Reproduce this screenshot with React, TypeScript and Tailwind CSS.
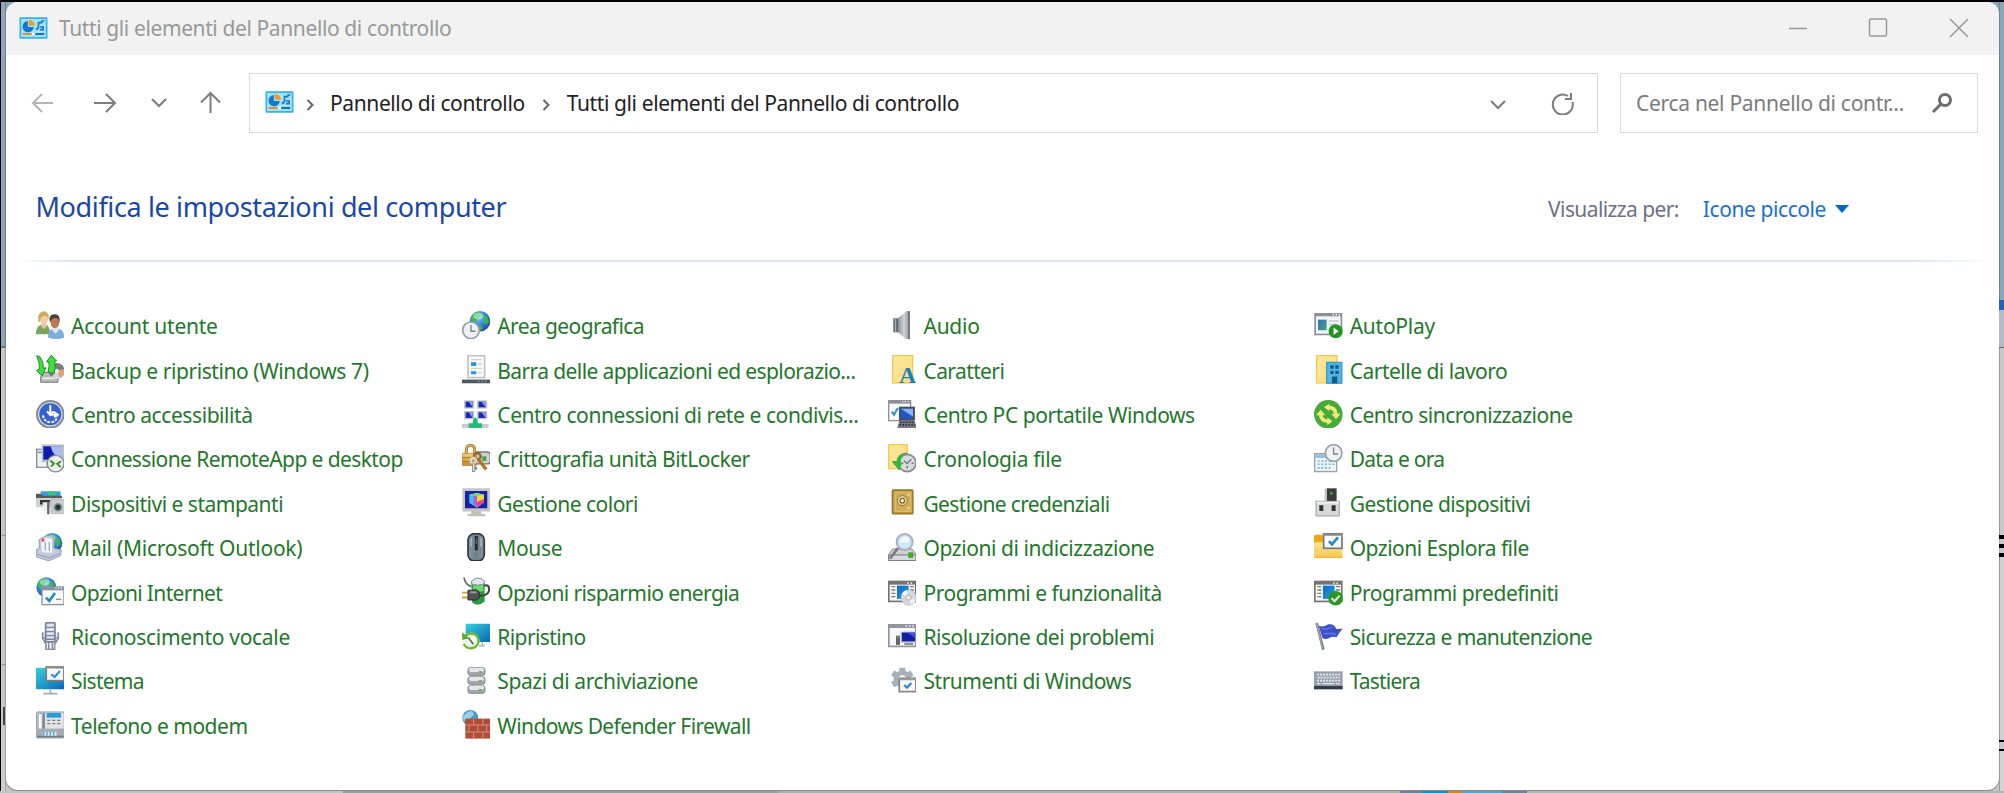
import type { ReactNode } from "react";

type Item = { label: string; icon: ReactNode; tracking: string };

const snug = "tracking-[-0.25px]";
const close = "tracking-[-0.42px]";
const normal = "tracking-[-0.5px]";
const tight = "tracking-[-0.6px]";
const tighter = "tracking-[-0.73px]";

const Win = ({ x = 0, y = 0, w = 86, h = 70, bar = 12, c = "#7b7b7b" }) => (
  <>
    <rect x={x} y={y} width={w} height={h} fill={c} />
    <rect x={x + 4} y={y + bar} width={w - 8} height={h - bar - 4} fill="#fafafa" />
    <path d={`M${x + w - 28} ${y + 5}h4m4 0h4m4 0h4`} stroke="#e8e8e8" strokeWidth="4" />
  </>
);

const Globe = ({ cx = 30, cy = 30, r = 30 }) => (
  <>
    <circle cx={cx} cy={cy} r={r} fill="url(#globe)" />
    <path
      transform={`translate(${cx - r} ${cy - r}) scale(${r / 30})`}
      d="M6 16Q16 2 30 4L34 12L26 20L22 30L12 34L6 28ZM38 8L52 18L56 32L48 40L40 34L42 24L36 18ZM26 40L38 44L36 56L28 56Z"
      fill="#3fc03c"
      opacity=".85"
    />
    <ellipse cx={cx - r * 0.15} cy={cy - r * 0.5} rx={r * 0.5} ry={r * 0.32} fill="#fff" opacity=".4" />
  </>
);

const Clock = ({ cx = 28, cy = 28, r = 26 }) => (
  <>
    <circle cx={cx} cy={cy} r={r - 2} fill="#eef1f4" stroke="#98a0a6" strokeWidth="5" />
    <path d={`M${cx} ${cy - r * 0.6}V${cy + 3}H${cx + r * 0.5}`} fill="none" stroke="#75828e" strokeWidth="4" />
  </>
);

const ProgramList = () => (
  <>
    <rect x="0" y="11" width="86" height="65" fill="#76736f" />
    <rect x="5" y="23" width="76" height="48" fill="#f7f7f7" />
    <path d="M60 16v6M70 16v6" stroke="#ddd" strokeWidth="5" />
    <path d="M10 29h12M10 39h12M10 49h12M10 59h12M66 29h12M66 39h12" stroke="#77808a" strokeWidth="4" />
    <rect x="27" y="26" width="35" height="40" fill="url(#tile)" />
  </>
);

const Folder = ({ x = 0, y = 0, w = 64, h = 84 }) => (
  <rect x={x + 2} y={y + 2} width={w - 4} height={h - 4} fill="url(#folder)" stroke="#f2cb4d" strokeWidth="4" />
);

const items: Item[] = [
  {
    label: "Account utente",
    tracking: snug,
    icon: (
      <>
        <path d="M0 70Q0 44 16 41L34 43Q42 50 42 70Z" fill="#78a45b" />
        <path d="M16 36h14l2 10-8 9-9-9Z" fill="#e9c39a" />
        <ellipse cx="24" cy="22" rx="13" ry="17" fill="#f0cfa4" />
        <path d="M7 32Q2 3 24 1Q41 2 39 28Q36 14 26 15Q14 14 12 32Z" fill="#cfae5a" />
        <path d="M36 80Q36 56 52 53L70 54Q85 59 85 80Q60 90 36 80Z" fill="#7fadde" />
        <path d="M50 50h16l2 8-9 10-10-9Z" fill="#dfeaf5" />
        <ellipse cx="57" cy="34" rx="13" ry="18" fill="#b67c50" />
        <path d="M42 34Q36 10 56 10Q74 9 71 35L67 24Q58 18 48 25Z" fill="#42433f" />
      </>
    ),
  },
  {
    label: "Area geografica",
    tracking: tight,
    icon: (
      <>
        <Globe cx={54} cy={31} r={31} />
        <Clock cx={27} cy={58} r={27} />
      </>
    ),
  },
  {
    label: "Audio",
    tracking: snug,
    icon: (
      <>
        <path d="M16 22H30V64H16Z" fill="#53616b" />
        <path d="M20 22h5v42h-5Z" fill="#a3afb7" />
        <path d="M30 22L56 0H66V86H56L30 64Z" fill="url(#cone)" />
        <path d="M63 1V85" stroke="#6b747c" strokeWidth="5" />
      </>
    ),
  },
  {
    label: "AutoPlay",
    tracking: snug,
    icon: (
      <>
        <rect x="1" y="6" width="84" height="67" fill="#8d9098" />
        <rect x="6" y="16" width="74" height="52" fill="#f4f5f8" />
        <path d="M56 11h4m5 0h4m5 0h4" stroke="#eee" strokeWidth="5" />
        <rect x="12" y="26" width="26" height="32" fill="url(#auto)" />
        <path d="M44 30h30M44 40h24" stroke="#c3c8cf" strokeWidth="4" />
        <circle cx="65" cy="61" r="21" fill="#269425" />
        <path d="M59 50V72L74 61Z" fill="#fff" />
      </>
    ),
  },
  {
    label: "Backup e ripristino (Windows 7)",
    tracking: close,
    icon: (
      <>
        <path d="M14 66L24 52H58L66 66V82H14Z" fill="#b8bbbd" stroke="#74787a" strokeWidth="3" />
        <path d="M18 70H62" stroke="#eee" strokeWidth="5" />
        <circle cx="62" cy="48" r="24" fill="#777b7d" />
        <path d="M62 48L46 66Q60 78 74 68Z" fill="#d5d5d5" />
        <path d="M62 48L86 42Q88 60 74 68Z" fill="#e3a27c" />
        <circle cx="62" cy="48" r="7" fill="#eee" />
        <path d="M2 2L12 6Q24 22 22 40L30 38L18 64L2 46L10 43Q12 22 2 2Z" fill="#3be03b" stroke="#258a25" strokeWidth="3" />
        <path d="M46 1L62 18L56 20Q60 40 54 56L36 50Q42 32 38 20L31 21Z" fill="#3be43b" stroke="#258a25" strokeWidth="3" />
      </>
    ),
  },
  {
    label: "Barra delle applicazioni ed esplorazio...",
    tracking: tight,
    icon: (
      <>
        <rect x="18" y="2" width="50" height="66" fill="#fafafa" stroke="#c2c2c2" strokeWidth="5" />
        <path d="M27 14H59M48 27H59M27 40H59M48 54H59" stroke="#cfcfcf" strokeWidth="4" />
        <path d="M27 22H43V33H27ZM27 49H43V58H27Z" fill="#2096e3" />
        <rect x="0" y="74" width="86" height="11" fill="#4c5862" />
        <path d="M48 79h5m5 0h5m5 0h5" stroke="#9ba3a9" strokeWidth="3" />
      </>
    ),
  },
  {
    label: "Caratteri",
    tracking: tight,
    icon: (
      <>
        <Folder x={12} w={64} h={86} />
        <text x="59" y="84" textAnchor="middle" fontSize="72" fontWeight="700" fill="#1980bb" className="[font-family:'Liberation_Serif',serif]">A</text>
      </>
    ),
  },
  {
    label: "Cartelle di lavoro",
    tracking: normal,
    icon: (
      <>
        <Folder x={6} w={65} h={86} />
        <rect x="38" y="22" width="46" height="63" fill="#4eb7e6" stroke="#2c8cbe" strokeWidth="3" />
        <path d="M49 31h10v10H49ZM64 31h10v10H64ZM49 47h10v10H49ZM64 47h10v10H64ZM54 65h16v20H54Z" fill="#155a85" />
      </>
    ),
  },
  {
    label: "Centro accessibilità",
    tracking: close,
    icon: (
      <>
        <circle cx="43" cy="43" r="43" fill="#858b92" />
        <circle cx="43" cy="43" r="37" fill="#cfd4da" />
        <circle cx="43" cy="43" r="33" fill="#3761cf" />
        <path d="M21 46Q24 66 43 67Q61 66 64 50" fill="none" stroke="#fff" strokeWidth="6" strokeDasharray="8 4" />
        <path d="M43 16V44H66M33 34L43 45L53 34M54 36L66 44L54 52" fill="none" stroke="#fff" strokeWidth="6" />
      </>
    ),
  },
  {
    label: "Centro connessioni di rete e condivis...",
    tracking: close,
    icon: (
      <>
        {[
          [6, 1],
          [45, 1],
          [6, 33],
          [45, 33],
        ].map(([x, y]) => (
          <g key={`${x}-${y}`}>
            <rect x={x} y={y} width="31" height="25" fill="#c3c5ca" />
            <rect x={x + 5} y={y + 4} width="21" height="17" fill="#1a27b8" />
            <path d={`M${x + 14} ${y + 4}H${x + 26}V${y + 21}Z`} fill="#8ea4ea" />
          </g>
        ))}
        <path d="M0 72H80V84H0Z" fill="#c9cdd0" />
        <path d="M20 70H32L34 58L40 52L46 58L48 70H60V85H20Z" fill="#21bd77" />
      </>
    ),
  },
  {
    label: "Centro PC portatile Windows",
    tracking: close,
    icon: (
      <>
        <Win w={70} h={64} bar={11} c="#8c9098" />
        <path d="M11 35L18 44L30 24" fill="none" stroke="#2c92cf" strokeWidth="6" />
        <rect x="33" y="20" width="48" height="42" fill="#4c4f58" />
        <rect x="39" y="26" width="36" height="30" fill="#2057cf" />
        <path d="M39 26H75V50Z" fill="#8bb5f6" />
        <path d="M34 62H80L86 84H28Z" fill="#747783" />
        <path d="M36 67H80M34 75H82" stroke="#33353c" strokeWidth="5" strokeDasharray="5 4" />
      </>
    ),
  },
  {
    label: "Centro sincronizzazione",
    tracking: normal,
    icon: (
      <>
        <circle cx="43" cy="43" r="43" fill="#46ab3b" />
        <path d="M20 44Q22 64 44 64M66 42Q64 22 42 22" fill="none" stroke="#f5e77c" strokeWidth="11" />
        <path d="M6 46L20 29L34 46ZM52 41L66 58L80 41Z" fill="#f5e77c" />
        <path d="M30 22L46 11V33ZM56 64L40 53V75Z" fill="#f5e77c" />
      </>
    ),
  },
  {
    label: "Connessione RemoteApp e desktop",
    tracking: tight,
    icon: (
      <>
        <rect x="2" y="16" width="32" height="54" fill="#f1f2f4" stroke="#8a9199" strokeWidth="4" />
        <path d="M4 25H18" stroke="#8a9199" strokeWidth="5" />
        <rect x="17" y="1" width="68" height="54" fill="#bfc3c9" />
        <rect x="22" y="7" width="56" height="40" fill="#0e1bb0" />
        <path d="M44 7H78V47Q52 40 44 7Z" fill="#a9bdf0" />
        <circle cx="59" cy="59" r="25" fill="#eef0ef" stroke="#8a8d8d" strokeWidth="4" />
        <path d="M43 50L54 59L45 68M75 52L64 60L74 69" fill="none" stroke="#319a27" strokeWidth="6" />
      </>
    ),
  },
  {
    label: "Crittografia unità BitLocker",
    tracking: normal,
    icon: (
      <>
        <rect x="40" y="24" width="45" height="36" rx="9" fill="#ced1d2" stroke="#777" strokeWidth="4" />
        <rect x="61" y="37" width="12" height="14" fill="#43aa3a" />
        <path d="M13 32V17Q14 4 26 4Q38 5 38 18V32" fill="none" stroke="#a5752d" strokeWidth="9" />
        <path d="M13 30V17Q14 4 26 4Q38 5 38 18V30" fill="none" stroke="#e6b75c" strokeWidth="4" />
        <rect x="0" y="28" width="44" height="37" rx="3" fill="url(#gold)" stroke="#a87829" strokeWidth="2" />
        <path d="M1 41H43M1 53H43" stroke="#a97925" strokeWidth="3" />
        <circle cx="46" cy="37" r="10" fill="none" stroke="#906522" strokeWidth="7" />
        <path d="M49 46L73 77" stroke="#ad772a" strokeWidth="10" />
        <circle cx="34" cy="50" r="8" fill="none" stroke="#d4d6d6" strokeWidth="7" />
        <path d="M35 58V84M35 73H45" stroke="#858889" strokeWidth="9" />
        <path d="M35 58V81" stroke="#e6e7e8" strokeWidth="4" />
      </>
    ),
  },
  {
    label: "Cronologia file",
    tracking: "tracking-[-0.35px]",
    icon: (
      <>
        <Folder x={0} w={60} h={76} />
        <path d="M56 27Q29 29 27 53H13L34 78L47 56L40 54Q40 39 58 34Z" fill="#32b944" stroke="#218e31" strokeWidth="2" />
        <circle cx="58" cy="57" r="26" fill="#d8dcdd" stroke="#848a8c" strokeWidth="5" />
        <path d="M48 50L57 59L70 46M58 66V74M40 58H46M71 58H77" fill="none" stroke="#6d7376" strokeWidth="4" />
        <path d="M36 36Q28 42 27 53H13L34 76L42 60L38 54Q38 44 46 36Z" fill="#32b944" />
      </>
    ),
  },
  {
    label: "Data e ora",
    tracking: tighter,
    icon: (
      <>
        <rect x="2" y="29" width="66" height="54" fill="#edf3f7" stroke="#9aa2a8" strokeWidth="4" />
        <path d="M4 31H50V42H4Z" fill="#8fc4df" />
        <path d="M11 51H62M11 61H62M11 72H52" stroke="#73b7da" strokeWidth="5" strokeDasharray="6 5" />
        <Clock cx={59} cy={27} r={27} />
      </>
    ),
  },
  {
    label: "Dispositivi e stampanti",
    tracking: normal,
    icon: (
      <>
        <path d="M14 10H74V28H14Z" fill="#3b9be2" />
        <path d="M36 10H60V22H36Z" fill="#31ca75" />
        <path d="M0 17H14L22 23H78V31H0Z" fill="#55595c" />
        <rect x="0" y="30" width="58" height="28" fill="#d0d2d2" />
        <path d="M12 36H42V43H20V50H12Z" fill="#333" />
        <path d="M22 44H34V70H22Z" fill="#ececec" />
        <path d="M37 40V79" stroke="#63676a" strokeWidth="7" />
        <rect x="45" y="34" width="41" height="43" rx="3" fill="#cacccd" stroke="#a5a8a9" strokeWidth="2" />
        <circle cx="66" cy="58" r="13" fill="#8a8f8f" />
        <circle cx="66" cy="58" r="8" fill="#243b3d" />
      </>
    ),
  },
  {
    label: "Gestione colori",
    tracking: normal,
    icon: (
      <>
        <path d="M28 68H58V78H70V85H17V78H28Z" fill="#bfc0b6" />
        <rect x="1" y="1" width="84" height="70" rx="3" fill="#c6c7c3" />
        <rect x="9" y="9" width="67" height="52" fill="#1822a5" />
        <path d="M23 20L45 15L66 20V43L45 59L23 44Z" fill="#fff" />
        <path d="M23 20L45 25V59L23 44Z" fill="#33c6f3" />
        <path d="M45 25L66 20V43L45 59Z" fill="#f23d87" />
        <path d="M23 20L45 15L66 20L45 30Z" fill="#6de260" />
        <path d="M45 25L66 20V33L45 42Z" fill="#f6da2d" />
        <path d="M34 22L45 25V57L34 50Z" fill="#b65ae8" />
      </>
    ),
  },
  {
    label: "Gestione credenziali",
    tracking: "tracking-[-0.65px]",
    icon: (
      <>
        <rect x="13" y="6" width="62" height="72" rx="3" fill="#bd963c" stroke="#95722b" strokeWidth="4" />
        <rect x="21" y="13" width="48" height="57" fill="#d0ab53" stroke="#e2c679" strokeWidth="3" />
        <circle cx="43" cy="38" r="15" fill="#e8d8a3" stroke="#947432" strokeWidth="3" />
        <circle cx="43" cy="38" r="7" fill="#f8f0d4" stroke="#806a3c" strokeWidth="4" />
        <path d="M59 21h5M59 60h5" stroke="#fff2c4" strokeWidth="5" />
      </>
    ),
  },
  {
    label: "Gestione dispositivi",
    tracking: "tracking-[-0.55px]",
    icon: (
      <>
        <rect x="38" y="1" width="30" height="40" fill="#393d3e" />
        <path d="M35 2V40" stroke="#c4c7c9" strokeWidth="6" />
        <circle cx="52" cy="16" r="4" fill="#36b83b" />
        <rect x="6" y="40" width="70" height="44" fill="#d6d8d9" stroke="#9b9ea0" strokeWidth="3" />
        <path d="M9 44H75" stroke="#f3f3f3" strokeWidth="6" />
        <path d="M16 52H28V69H16ZM53 52H65V69H53Z" fill="#303436" />
      </>
    ),
  },
  {
    label: "Mail (Microsoft Outlook)",
    tracking: snug,
    icon: (
      <>
        <Globe cx={48} cy={31} r={31} />
        <path d="M9 20L27 10Q46 2 54 16L54 46L76 51L74 68L39 84L2 72V49L10 46Z" fill="#c3ccda" stroke="#93a0b5" strokeWidth="3" />
        <path d="M16 20L29 14L48 18V60L18 57Z" fill="#f3f6fa" />
        <path d="M28 28V52M40 28V54M4 64L40 75L73 61" fill="none" stroke="#9aa8bd" strokeWidth="4" />
        <path d="M17 17h8v9h-8Z" fill="#ed493a" />
      </>
    ),
  },
  {
    label: "Mouse",
    tracking: "tracking-[-0.35px]",
    icon: (
      <>
        <rect x="18" y="2" width="49" height="82" rx="19" fill="url(#mouse)" stroke="#30363b" strokeWidth="5" />
        <path d="M28 14V40M57 14V40" stroke="#aebac5" strokeWidth="4" />
        <path d="M43 9V52" stroke="#252a2f" strokeWidth="9" />
        <path d="M43 17V33" stroke="#6b7c8a" strokeWidth="3" />
      </>
    ),
  },
  {
    label: "Opzioni di indicizzazione",
    tracking: close,
    icon: (
      <>
        <path d="M14 48H72L85 65V82H1V66Z" fill="#cfd0d2" stroke="#8b8c90" strokeWidth="3" />
        <path d="M2 66H84V83H2Z" fill="#d8d9dc" stroke="#77787d" strokeWidth="3" />
        <rect x="61" y="58" width="15" height="17" fill="#47ad27" />
        <path d="M30 45L6 77" stroke="#777983" strokeWidth="8" />
        <circle cx="50" cy="27" r="24" fill="#d0e6fa" stroke="#a5afbc" strokeWidth="6" />
        <path d="M34 29Q38 11 56 10Q65 16 63 28Z" fill="#f3faff" />
      </>
    ),
  },
  {
    label: "Opzioni Esplora file",
    tracking: normal,
    icon: (
      <>
        <path d="M0 10Q0 5 5 5H25L34 15H86V35H0Z" fill="#eba813" />
        <rect x="0" y="28" width="86" height="47" rx="4" fill="url(#folderBig)" />
        <path d="M2 73H84" stroke="#e7b040" strokeWidth="3" />
        <rect x="29" y="2" width="55" height="44" fill="#fafafa" stroke="#75787b" strokeWidth="5" />
        <path d="M28 5H85M65 2V8M75 2V8" stroke="#8b8b8b" strokeWidth="6" />
        <path d="M45 25L54 34L72 13" fill="none" stroke="#2187dc" strokeWidth="8" />
      </>
    ),
  },
  {
    label: "Opzioni Internet",
    tracking: "tracking-[-0.65px]",
    icon: (
      <>
        <Globe cx={31} cy={31} r={30} />
        <Win x={16} y={28} w={70} h={57} bar={12} c="#8a929a" />
        <path d="M30 62L40 72L57 48" fill="none" stroke="#2389c4" strokeWidth="8" />
        <path d="M60 67H76" stroke="#858e96" strokeWidth="4" />
      </>
    ),
  },
  {
    label: "Opzioni risparmio energia",
    tracking: tight,
    icon: (
      <>
        <path d="M28 12Q46 -6 68 12V74Q48 92 30 76Z" fill="#2f9a3c" />
        <path d="M29 12Q48 -6 67 12V21Q47 28 29 21Z" fill="#e4e7f1" stroke="#8e92a5" strokeWidth="3" />
        <path d="M33 24Q48 29 64 23V42Q48 47 33 40Z" fill="#6fd872" />
        <path d="M66 26Q84 20 81 42Q76 57 52 56" fill="none" stroke="#3c3e40" strokeWidth="6" />
        <path d="M6 2Q9 22 28 29" fill="none" stroke="#626669" strokeWidth="5" />
        <path d="M0 47H20M0 62H20" stroke="#d8a528" strokeWidth="6" />
        <path d="M18 40H32Q42 34 52 45V63Q42 74 32 69H18Z" fill="#4f5254" stroke="#2f3133" strokeWidth="3" />
        <path d="M24 46H44" stroke="#989c9e" strokeWidth="6" />
      </>
    ),
  },
  {
    label: "Programmi e funzionalità",
    tracking: normal,
    icon: (
      <>
        <ProgramList />
        <circle cx="62" cy="62" r="23" fill="#d6dadd" stroke="#b5babd" strokeWidth="2" />
        <path d="M62 62L42 51A23 23 0 0 1 56 40ZM62 62L83 70A23 23 0 0 1 70 82Z" fill="#f3f4f5" />
        <circle cx="62" cy="62" r="8" fill="#eee" stroke="#a8adb0" strokeWidth="3" />
      </>
    ),
  },
  {
    label: "Programmi predefiniti",
    tracking: "tracking-[-0.46px]",
    icon: (
      <>
        <ProgramList />
        <circle cx="65" cy="64" r="22" fill="#2b9724" />
        <path d="M53 64L62 73L77 56" fill="none" stroke="#e3f6d9" strokeWidth="6" />
      </>
    ),
  },
  {
    label: "Riconoscimento vocale",
    tracking: "tracking-[-0.3px]",
    icon: (
      <>
        <path d="M20 31V49L30 67V83H56V67L67 49V31" fill="#eef0f4" stroke="#8990a2" strokeWidth="5" />
        <rect x="29" y="2" width="28" height="58" rx="4" fill="#e0e4ec" stroke="#777f94" strokeWidth="5" />
        <path d="M29 16H57M29 29H57M29 41H57M29 52H57M38 61V82M49 61V82M19 48H30M57 48H68" stroke="#7b8398" strokeWidth="4" />
      </>
    ),
  },
  {
    label: "Ripristino",
    tracking: tight,
    icon: (
      <>
        <rect x="11" y="5" width="75" height="55" rx="2" fill="url(#screen)" />
        <path d="M51 72H69M61 60V72" stroke="#a2aeb7" strokeWidth="4" />
        <circle cx="27" cy="57" r="25" fill="#eff7e7" />
        <path d="M7 46Q20 29 38 37Q54 47 48 66Q38 83 18 78Q8 74 5 66" fill="none" stroke="#6fba34" strokeWidth="7" />
        <path d="M0 31L1 54L23 49Z" fill="#5eac28" />
        <path d="M20 48L34 67" stroke="#5f6566" strokeWidth="5" />
      </>
    ),
  },
  {
    label: "Risoluzione dei problemi",
    tracking: normal,
    icon: (
      <>
        <rect x="0" y="6" width="86" height="70" fill="#92959e" />
        <rect x="5" y="18" width="76" height="53" fill="#f8f8fa" />
        <path d="M53 12h5m5 0h5m5 0h5" stroke="#edf0f7" strokeWidth="4" />
        <path d="M24 41H36V69H24Z" fill="#60666b" />
        <path d="M27 45h6" stroke="#64b84f" strokeWidth="4" />
        <rect x="38" y="29" width="48" height="33" fill="#b2b7c4" />
        <rect x="42" y="32" width="40" height="26" fill="#101ea7" />
        <path d="M59 32H82V49Z" fill="#4052da" />
        <path d="M49 66H76" stroke="#8c919b" strokeWidth="7" />
      </>
    ),
  },
  {
    label: "Sicurezza e manutenzione",
    tracking: tight,
    icon: (
      <>
        <path d="M8 3L28 83" stroke="#6d747a" strokeWidth="8" />
        <path d="M8 4L26 79" stroke="#b2b8bd" strokeWidth="3" />
        <path d="M14 11Q29 17 43 7Q61 4 67 21L86 20Q74 33 68 46Q54 42 45 49Q35 54 26 49Z" fill="#3f50c6" />
        <path d="M22 20Q36 24 55 15M28 37Q45 31 67 38" fill="none" stroke="#5f70df" strokeWidth="5" />
      </>
    ),
  },
  {
    label: "Sistema",
    tracking: tighter,
    icon: (
      <>
        <rect x="0" y="5" width="86" height="65" rx="3" fill="url(#screen)" />
        <path d="M43 70V82M22 83H64" stroke="#9eabb6" strokeWidth="5" />
        <rect x="31" y="2" width="53" height="42" fill="#fafafa" stroke="#827c79" strokeWidth="5" />
        <path d="M29 4H86M65 2V8M76 2V8" stroke="#92908d" strokeWidth="7" />
        <path d="M46 25L56 33L72 15" fill="none" stroke="#3195de" strokeWidth="7" />
      </>
    ),
  },
  {
    label: "Spazi di archiviazione",
    tracking: close,
    icon: (
      <>
        {[5, 32, 59].map((y) => (
          <g key={y}>
            <rect x="18" y={y} width="51" height="23" rx="7" fill="#a4a5ad" stroke="#82838d" strokeWidth="3" />
            <rect x="21" y={y} width="45" height="13" rx="6" fill="#e6e6ea" />
            <path d={`M50 ${y + 13}h10`} stroke="#50bd34" strokeWidth="5" />
          </g>
        ))}
      </>
    ),
  },
  {
    label: "Strumenti di Windows",
    tracking: "tracking-[-0.47px]",
    icon: (
      <>
        <g stroke="#a7b0b9" strokeWidth="18">
          <path d="M43 5V72M14 21L72 56M14 56L72 21" />
        </g>
        <circle cx="43" cy="39" r="26" fill="#a7b0b9" />
        <circle cx="43" cy="39" r="11" fill="#fff" />
        <rect x="34" y="37" width="50" height="40" fill="#fafafa" stroke="#85817e" strokeWidth="5" />
        <path d="M32 39H86M65 37V42M76 37V42" stroke="#9c9995" strokeWidth="7" />
        <path d="M49 57L57 65L70 51" fill="none" stroke="#278be0" strokeWidth="7" />
      </>
    ),
  },
  {
    label: "Tastiera",
    tracking: "tracking-[-0.8px]",
    icon: (
      <>
        <rect x="0" y="16" width="86" height="54" fill="#97a1ab" />
        <path d="M0 60H86V70H0Z" fill="#343f49" />
        <path d="M9 26H78M11 35H78M9 44H78" stroke="#e6e9ec" strokeWidth="5" strokeDasharray="6 3" />
        <path d="M9 53H19M24 53H62M67 53H78" stroke="#e6e9ec" strokeWidth="4" />
      </>
    ),
  },
  {
    label: "Telefono e modem",
    tracking: normal,
    icon: (
      <>
        <rect x="1" y="6" width="84" height="78" rx="3" fill="#e2e4e7" stroke="#91979d" strokeWidth="3" />
        <rect x="6" y="10" width="13" height="52" rx="4" fill="#f8f9fa" stroke="#868d94" strokeWidth="3" />
        <path d="M24 8V61" stroke="#565f67" strokeWidth="4" />
        <rect x="32" y="9" width="43" height="14" fill="#2c9ddb" />
        <path d="M34 31H76M34 41H76" stroke="#737c84" strokeWidth="4" strokeDasharray="9 6" />
        <path d="M2 56H84V82H2Z" fill="#a4abb1" />
        <path d="M3 80H83" stroke="#737b82" strokeWidth="5" />
        <path d="M20 66H62V77H20Z" fill="#d9edf9" />
        <path d="M23 66V77M33 66V77M43 66V77M53 66V77" stroke="#3a9fd4" strokeWidth="4" />
      </>
    ),
  },
  {
    label: "Windows Defender Firewall",
    tracking: tight,
    icon: (
      <>
        <circle cx="25" cy="24" r="24" fill="#4a9cc8" />
        <path d="M4 18Q16 3 30 4L36 14L25 24L13 34L4 30Z" fill="#9ed1e8" />
        <rect x="10" y="26" width="76" height="60" fill="#b04c37" />
        <path d="M10 45H86M10 66H86M35 27V45M63 27V45M21 46V65M48 46V65M74 46V65M35 67V86M63 67V86" stroke="#d79582" strokeWidth="3" />
      </>
    ),
  },
];

const Defs = () => (
  <svg className="absolute size-0" aria-hidden="true">
    <defs>
      <radialGradient id="globe" cx=".4" cy=".3" r=".8">
        <stop stopColor="#8ad4ff" />
        <stop offset=".5" stopColor="#2f7fdc" />
        <stop offset="1" stopColor="#173b9e" />
      </radialGradient>
      <linearGradient id="cone">
        <stop stopColor="#8a9299" />
        <stop offset=".5" stopColor="#cfd3d6" />
        <stop offset="1" stopColor="#8b9298" />
      </linearGradient>
      <linearGradient id="auto" x2="1" y2="1">
        <stop stopColor="#3b6fb2" />
        <stop offset="1" stopColor="#3fa77d" />
      </linearGradient>
      <linearGradient id="tile" x2="1" y2="1">
        <stop stopColor="#0a6cc5" />
        <stop offset="1" stopColor="#2c9ae6" />
      </linearGradient>
      <linearGradient id="folder" x2="1" y2="1">
        <stop stopColor="#ffe9a0" />
        <stop offset="1" stopColor="#fbdb7d" />
      </linearGradient>
      <linearGradient id="folderBig" x2="0" y2="1">
        <stop stopColor="#ffe392" />
        <stop offset="1" stopColor="#f9c84f" />
      </linearGradient>
      <linearGradient id="gold" x2="0" y2="1">
        <stop stopColor="#f2cf77" />
        <stop offset="1" stopColor="#c6892a" />
      </linearGradient>
      <linearGradient id="mouse">
        <stop stopColor="#8797a5" />
        <stop offset=".5" stopColor="#6f7f8c" />
        <stop offset="1" stopColor="#8494a1" />
      </linearGradient>
      <linearGradient id="screen" x2="1" y2="1">
        <stop stopColor="#35d0dc" />
        <stop offset="1" stopColor="#0a66b8" />
      </linearGradient>
    </defs>
  </svg>
);

const PanelIcon = ({ className = "" }: { className?: string }) => (
  <svg viewBox="0 0 86 66" className={`h-[22px] w-[29px] shrink-0 ${className}`}>
    <rect x="1" y="1" width="84" height="64" rx="2" fill="#35b4ea" />
    <rect x="6" y="6" width="74" height="54" fill="#a5e3fb" />
    <path d="M26 12A17 17 0 1 0 44 30H26Z" fill="#1279cd" />
    <path d="M29 8A18 18 0 0 1 47 26H29Z" fill="#f59b22" />
    <path d="M50 37Q58 37 58 27V17H70M66 12H76M62 30H72V38H62" fill="none" stroke="#1878c4" strokeWidth="5" />
    <path d="M11 51H38" stroke="#e48f25" strokeWidth="6" />
    <path d="M38 51H48" stroke="#fff" strokeWidth="6" />
    <path d="M48 51H75" stroke="#1272bd" strokeWidth="6" />
  </svg>
);

const Crumb = ({ className }: { className: string }) => (
  <svg viewBox="0 0 8 12" className={`h-3 w-2 shrink-0 ${className}`} fill="none" stroke="#666" strokeWidth="2">
    <path d="M1.5 1L6.5 6L1.5 11" />
  </svg>
);

export default function App() {
  return (
    <div className="flex h-[793px] w-[2004px] flex-col overflow-hidden bg-[#c6c6c8] font-['Noto_Sans',sans-serif] text-[21px] leading-7">
      <Defs />
      <div className="h-0.5 shrink-0 bg-black" />
      <div className="flex h-[789px] shrink-0 bg-[linear-gradient(to_bottom,#89a5b9_0,#8aa4bc_310px,#c8c8ca_345px,#c8c8ca_100%)]">
        <div className="flex w-1.5 shrink-0 flex-col border-l border-black">
          <div className="h-[344px] border-r border-[#70849a] bg-[#8ea6c0]" />
          <div className="h-[2px] bg-[#777]" />
          <div className="h-[187px] border-r border-[#aaa] bg-[#cac7ca]" />
          <div className="h-px bg-[#999]" />
          <div className="h-[128px] border-r border-[#aaa] bg-[#cbcbce]" />
          <div className="h-px bg-[#999]" />
          <div className="h-[42px] border-r border-[#aaa] bg-[#c9c7c9]" />
          <div className="ml-0.5 h-[18px] w-0.5 bg-[#444]" />
          <div className="grow border-r border-[#aaa] bg-[#ccc]" />
        </div>

        <div className="h-[788px] w-[1993px] shrink-0 overflow-hidden rounded-[12px] bg-white shadow-[0_1px_2px_#777]">
          <header className="flex h-[53px] items-center bg-[#f2f2f2] pb-[2px] pl-[13px]">
            <PanelIcon />
            <h1 className="ml-[11px] tracking-[-0.39px] text-[#999]">Tutti gli elementi del Pannello di controllo</h1>
            <svg viewBox="0 0 180 20" className="mr-[30px] ml-auto h-5 w-[180px]" fill="none" stroke="#999" strokeWidth="1.5">
              <path d="M0 10.5H18M161 1L179 19M179 1L161 19" />
              <rect x="80.5" y="1" width="17" height="17" rx="1.5" />
            </svg>
          </header>

          <nav className="flex h-[96px] items-center pl-[25px]">
            <svg viewBox="0 0 192 26" className="h-[26px] w-48 shrink-0" fill="none" strokeWidth="2">
              <path d="M22 13H2M11 4L2 13L11 22" stroke="#b4b4b4" />
              <path d="M63 13H84M75 4L84 13L75 22" stroke="#7c7c7c" />
              <path d="M121 9L128 16L135 9" stroke="#7c7c7c" />
              <path d="M179.500 23V3M170 12.500L179.500 3L189 12.500" stroke="#7c7c7c" />
            </svg>
            <div className="ml-[26px] flex h-[60px] w-[1349px] items-center border-[1.5px] border-[#d9d9d9] pr-[23px] pl-[15px]">
              <PanelIcon className="-mt-0.5" />
              <Crumb className="mt-1 ml-[12px]" />
              <span className="ml-[16px] tracking-[-0.39px] text-[#222]">Pannello di controllo</span>
              <Crumb className="mt-1 ml-[17px]" />
              <span className="ml-[17px] tracking-[-0.39px] text-[#222]">Tutti gli elementi del Pannello di controllo</span>
              <svg viewBox="0 0 84 24" className="ml-auto h-6 w-[84px]" fill="none" stroke="#7c7c7c" strokeWidth="2">
                <path d="M1 10L8 17L15 10M82.500 11A10 10 0 1 1 78 5M81 2V8H75" />
              </svg>
            </div>
            <div className="ml-[22px] flex h-[60px] w-[358px] items-center border-[1.5px] border-[#d9d9d9] pr-[24px] pl-[15px]">
              <span className="tracking-[-0.3px] text-[#7c7c7c]">Cerca nel Pannello di contr...</span>
              <svg viewBox="0 0 22 22" className="ml-auto h-[22px] w-[22px]" fill="none" stroke="#6d6d6d" strokeWidth="3">
                <circle cx="14" cy="8" r="5.500" />
                <path d="M10 12L2 20" />
              </svg>
            </div>
          </nav>

          <section className="flex h-[109px] items-center pl-[29.500px]">
            <h2 className="mt-[2px] text-[27px] leading-9 tracking-[-0.37px] text-[#1a48a8]">Modifica le impostazioni del computer</h2>
            <span className="mt-[6px] ml-auto tracking-[-0.6px] text-[#6c7184]">Visualizza per:</span>
            <button className="mt-[6px] mr-[150px] ml-6 flex items-center gap-[9px] tracking-[-0.42px] text-[#1a6fd9]">
              Icone piccole
              <svg viewBox="0 0 14 8" className="h-2 w-3.5">
                <path d="M0 0H14L7 8Z" fill="#0067d2" />
              </svg>
            </button>
          </section>
          <div className="ml-2 h-[2px] w-[1978px] bg-[linear-gradient(to_right,transparent,#d9e5f4_3%,#d9e5f4_96%,transparent)]" />

          <main className="grid auto-rows-[44.4px] grid-cols-[repeat(4,426.2px)] pt-[42px] pl-[29.5px]">
            {items.map((item) => (
              <a key={item.label} className="flex items-center whitespace-nowrap">
                <svg viewBox="0 0 86 86" className="mb-0.5 h-[28.6px] w-[28.6px] shrink-0">{item.icon}</svg>
                <span className={`ml-[7px] text-[#22782a] ${item.tracking}`}>{item.label}</span>
              </a>
            ))}
          </main>
        </div>

        <div className="flex w-[5px] shrink-0 flex-col">
          <div className="h-[298px] border-l border-[#6e8798] bg-[#8aa7ba]" />
          <div className="h-[10px] bg-[#2362b8]" />
          <div className="h-[37px] bg-[#b4bac5]" />
          <div className="h-px bg-[#666]" />
          <div className="h-[187px] border-l border-[#999] bg-[#c7c7c7]" />
          <div className="flex h-[22px] flex-col justify-between">
            <div className="h-1 bg-black" />
            <div className="h-1 bg-black" />
            <div className="h-1 bg-black" />
          </div>
          <div className="h-[183px] border-l border-[#999] bg-[#cfcfcf]" />
          <div className="flex h-[11px] flex-col justify-between">
            <div className="h-0.5 bg-black" />
            <div className="h-0.5 bg-black" />
          </div>
          <div className="grow border-l border-[#999] bg-[#d2d2d2]" />
        </div>
      </div>
      <div className="flex h-0.5 shrink-0">
        <div className="w-[343px] bg-[#c4c4c4]" />
        <div className="w-[435px] bg-[#9d9d9d]" />
        <div className="w-[622px] bg-[#adadad]" />
        <div className="w-[22px] bg-[#6f8097]" />
        <div className="w-[26px] bg-[#1c8cc4]" />
        <div className="w-[14px] bg-[#d0842c]" />
        <div className="w-[40px] bg-[#5f9fc8]" />
        <div className="w-[25px] bg-[#6f8097]" />
        <div className="grow bg-[#b4b4b4]" />
      </div>
    </div>
  );
}
